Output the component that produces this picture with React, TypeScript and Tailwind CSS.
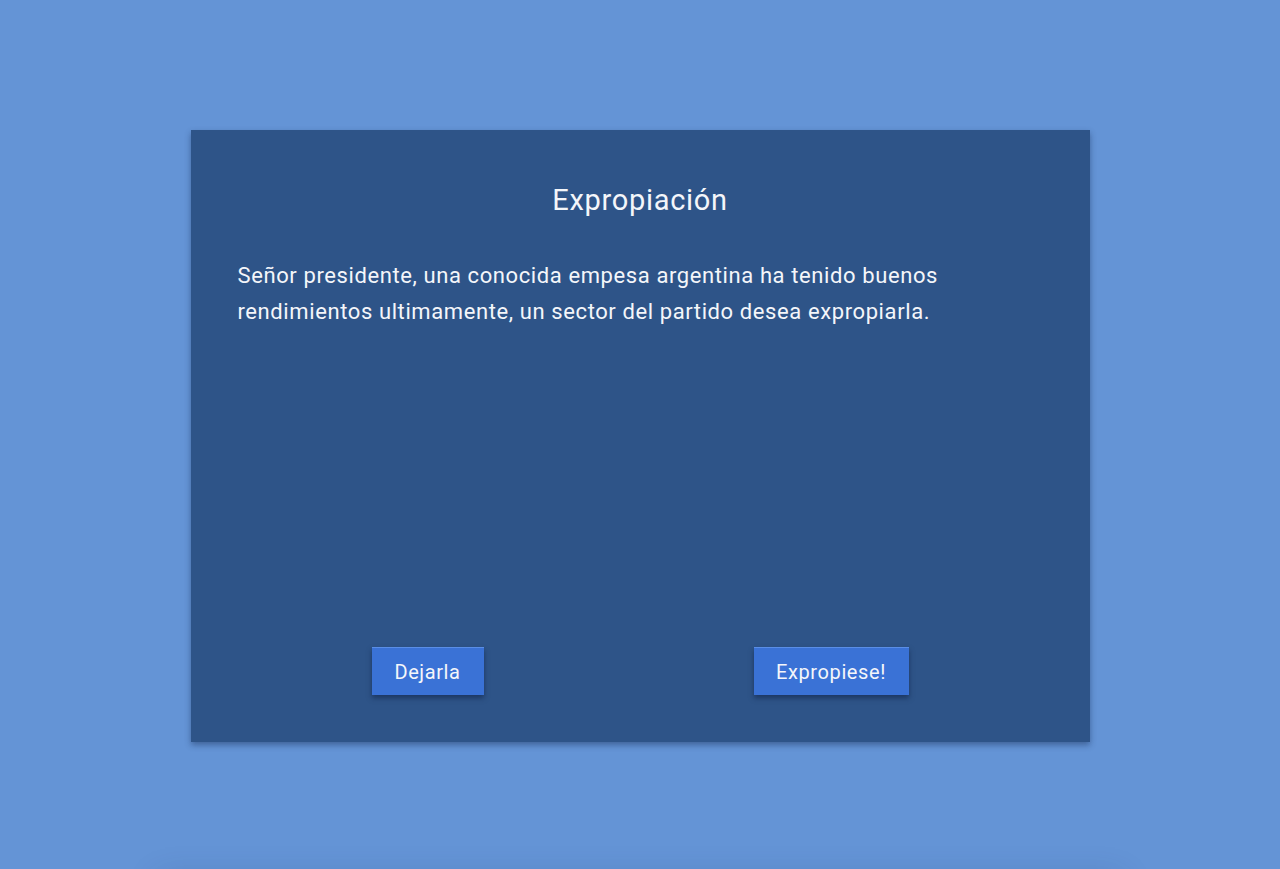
import React from "react";

export default function App() {
  return (
    <div
      className="relative h-[869px] w-full overflow-hidden bg-[#6494d6]"
      style={{ fontFamily: "Roboto, 'Noto Sans', sans-serif" }}
    >
      <div className="pt-[130px]">
        <div className="mx-auto flex h-[612px] w-[899px] flex-col bg-[#2e5488] text-white shadow-[0_3px_6px_rgba(20,40,80,0.45)]">
          <h1 className="mt-[52px] text-center text-[29px] font-normal leading-[36px] tracking-[0.7px] text-[#f4f6fa]">
            Expropiación
          </h1>
          <p className="mt-[40px] px-[47px] text-[22px] leading-[36px] tracking-[0.6px] text-[#f4f6fa]">
            Señor presidente, una conocida empesa argentina ha tenido buenos
            <br />
            rendimientos ultimamente, un sector del partido desea expropiarla.
          </p>
          <div className="mt-auto mb-[47px] flex gap-[270px] pl-[181px]">
            <button className="h-[48px] w-[112px] border-t border-[#5a8ee6] bg-[#3a72d6] text-[20px] tracking-[0.6px] text-[#f4f6fa] shadow-[0_3px_5px_rgba(10,25,60,0.5)]">
              Dejarla
            </button>
            <button className="h-[48px] w-[155px] border-t border-[#5a8ee6] bg-[#3a72d6] text-[20px] tracking-[0.6px] text-[#f4f6fa] shadow-[0_3px_5px_rgba(10,25,60,0.5)]">
              Expropiese!
            </button>
          </div>
        </div>
      </div>
      {/* next panel, just below the fold */}
      <div className="absolute left-[160px] top-[880px] h-[200px] w-[960px] bg-[#6494d6] shadow-[0_0_30px_rgba(30,60,110,0.25)]" />
    </div>
  );
}
